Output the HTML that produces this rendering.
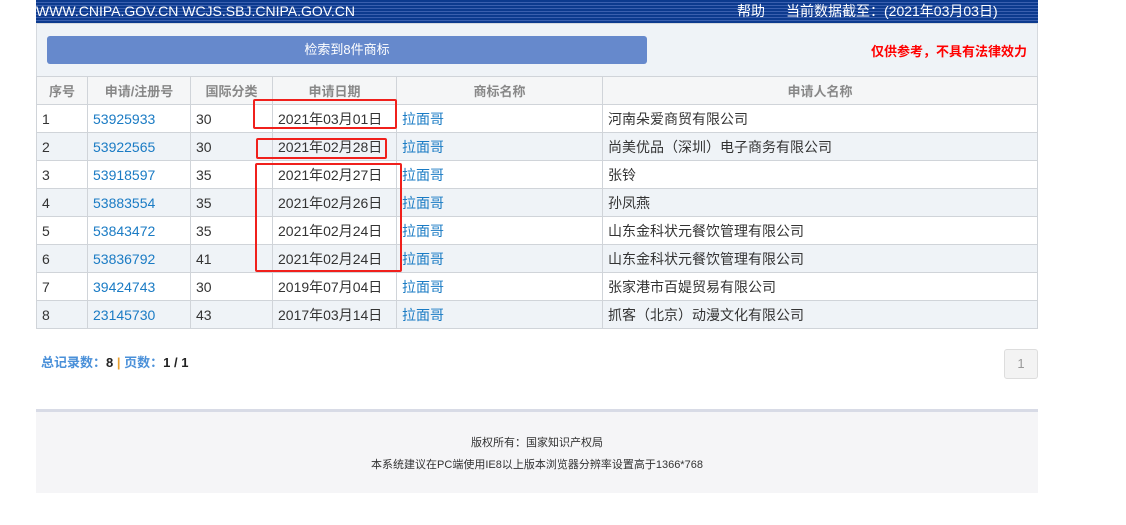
<!DOCTYPE html><html><head><meta charset="utf-8"><style>
body{margin:0;width:1126px;height:525px;background:#fff;font-family:"Liberation Sans","Noto Sans CJK SC",sans-serif;position:relative;overflow:hidden}
.hd{position:absolute;left:36px;top:0;width:1002px;height:23px;background:repeating-linear-gradient(#0c3a8e 0,#0c3a8e 2px,#3a5fae 2px,#3a5fae 3px);color:#fff;font-size:14px;line-height:23px}
.tb{position:absolute;left:36px;top:23px;width:1000px;height:53px;background:#eff3f7;border:1px solid #d5d9de;border-bottom:none}
.btn{position:absolute;left:10px;top:12px;width:600px;height:28px;background:#6689cc;border-radius:3px;color:#fff;font-size:13px;text-align:center;line-height:28px}
.warn{position:absolute;right:10px;top:17px;color:#f00;font-size:13px;font-weight:bold}
table{position:absolute;left:36px;top:76px;width:1001px;border-collapse:collapse;font-size:14px;table-layout:fixed}
td,th{border:1px solid #d0d4d9;height:27px;padding:0 0 0 5px;text-align:left;color:#333;font-weight:normal;white-space:nowrap;overflow:hidden}
th{background:#f5f6f7;color:#888;text-align:center;font-weight:bold;padding:0;font-size:13px}
tr:nth-child(odd) td{background:#eff3f7}
a{color:#1a7bc4}
.rb{position:absolute;border:2.5px solid #f0201c;border-radius:2px}
.ft{position:absolute;left:36px;top:409px;width:1002px;height:81px;background:#f5f5f7;border-top:3px solid #d8dbe6;text-align:center;font-size:11px;color:#333}
</style></head><body>
<div class="hd"><span style="position:absolute;left:0">WWW.CNIPA.GOV.CN WCJS.SBJ.CNIPA.GOV.CN</span><span style="position:absolute;left:701px">帮助</span><span style="position:absolute;left:750px">当前数据截至：(2021年03月03日)</span></div>
<div class="tb"><div class="btn">检索到8件商标</div><div class="warn">仅供参考，不具有法律效力</div></div>
<table>
<colgroup><col style="width:51px"><col style="width:103px"><col style="width:82px"><col style="width:124px"><col style="width:206px"><col style="width:435px"></colgroup>
<tr><th>序号</th><th>申请/注册号</th><th>国际分类</th><th>申请日期</th><th>商标名称</th><th>申请人名称</th></tr>
<tr><td>1</td><td><a>53925933</a></td><td>30</td><td>2021年03月01日</td><td><a>拉面哥</a></td><td>河南朵爱商贸有限公司</td></tr>
<tr><td>2</td><td><a>53922565</a></td><td>30</td><td>2021年02月28日</td><td><a>拉面哥</a></td><td>尚美优品（深圳）电子商务有限公司</td></tr>
<tr><td>3</td><td><a>53918597</a></td><td>35</td><td>2021年02月27日</td><td><a>拉面哥</a></td><td>张铃</td></tr>
<tr><td>4</td><td><a>53883554</a></td><td>35</td><td>2021年02月26日</td><td><a>拉面哥</a></td><td>孙凤燕</td></tr>
<tr><td>5</td><td><a>53843472</a></td><td>35</td><td>2021年02月24日</td><td><a>拉面哥</a></td><td>山东金科状元餐饮管理有限公司</td></tr>
<tr><td>6</td><td><a>53836792</a></td><td>41</td><td>2021年02月24日</td><td><a>拉面哥</a></td><td>山东金科状元餐饮管理有限公司</td></tr>
<tr><td>7</td><td><a>39424743</a></td><td>30</td><td>2019年07月04日</td><td><a>拉面哥</a></td><td>张家港市百媞贸易有限公司</td></tr>
<tr><td>8</td><td><a>23145730</a></td><td>43</td><td>2017年03月14日</td><td><a>拉面哥</a></td><td>抓客（北京）动漫文化有限公司</td></tr>
</table>
<div class="rb" style="left:253px;top:99px;width:140px;height:26px"></div>
<div class="rb" style="left:256px;top:138px;width:127px;height:17px"></div>
<div class="rb" style="left:255px;top:163px;width:143px;height:105px"></div>
<div style="position:absolute;left:41px;top:352px;font-size:13px;color:#4a90d9;font-weight:bold">总记录数：<span style="color:#222">8</span> <span style="color:#e8a030">|</span> 页数：<span style="color:#222">1 / 1</span></div>
<div style="position:absolute;left:1004px;top:349px;width:32px;height:28px;border:1px solid #ddd;border-radius:3px;background:#f3f3f3;color:#999;font-size:13px;text-align:center;line-height:28px">1</div>
<div class="ft"><div style="margin-top:22px">版权所有：国家知识产权局</div><div style="margin-top:6px">本系统建议在PC端使用IE8以上版本浏览器分辨率设置高于1366*768</div></div>
</body></html>
